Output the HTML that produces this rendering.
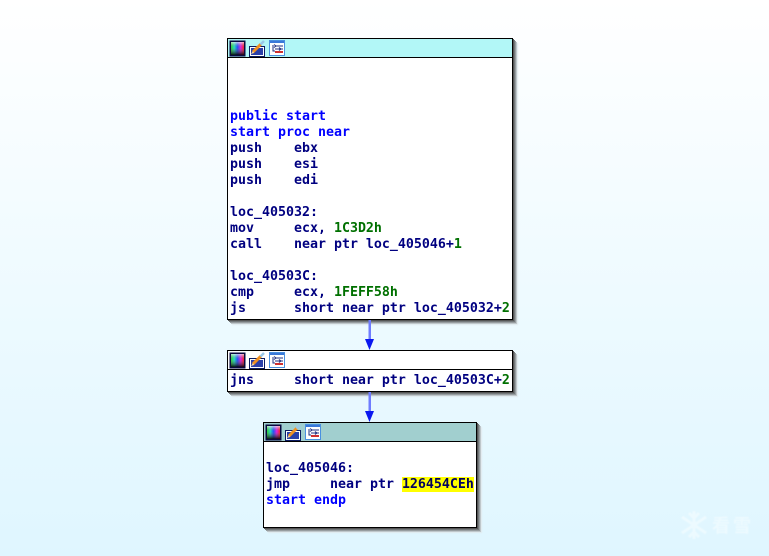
<!DOCTYPE html>
<html><head><meta charset="utf-8"><style>
html,body{margin:0;padding:0}
body{width:769px;height:556px;overflow:hidden;position:relative;background:linear-gradient(180deg,#ffffff 0%,#dff6ff 100%);font-family:"DejaVu Sans Mono",monospace;}
.b{position:absolute;box-sizing:border-box;border:1px solid #000;background:#fff;box-shadow:1px 1px 0 #555,2px 2px 0 #74797b,3px 3px 0 #979da0,4px 4px 0 #bfc7cb,5px 5px 1px #e0eaee}
.h{position:absolute;left:0;right:0;top:0;height:18px;border-bottom:1px solid #000}
.i{position:absolute;top:1px;left:1px}
pre{position:absolute;margin:0;font:bold 13.29px/16px "DejaVu Sans Mono",monospace;color:#000080;letter-spacing:0}
.k{color:#0000ff}.g{color:#007000}
.y{background:#ffff00;color:#000060}
.w{position:absolute;color:#fff;opacity:.4}
</style></head><body>
<svg width="0" height="0" style="position:absolute"><defs>
<linearGradient id="r" x1="0" y1="0" x2="1" y2="0"><stop offset="0" stop-color="#30d030"/><stop offset=".25" stop-color="#20e0c0"/><stop offset=".5" stop-color="#2050ff"/><stop offset=".75" stop-color="#e020e0"/><stop offset="1" stop-color="#ff2020"/></linearGradient>
<linearGradient id="d" x1="0" y1="0" x2="0" y2="1"><stop offset="0" stop-color="#fff" stop-opacity=".7"/><stop offset=".4" stop-color="#888" stop-opacity="0"/><stop offset="1" stop-color="#000" stop-opacity=".9"/></linearGradient>
<symbol id="ic" viewBox="0 0 58 17" width="58" height="17">
<rect x=".5" y=".5" width="16" height="16" fill="#0a0a40"/><rect x="2" y="2" width="13" height="13" fill="url(#r)"/><rect x="2" y="2" width="13" height="13" fill="url(#d)"/>
<rect x="20.5" y="6.5" width="15" height="10" fill="#fff" stroke="#0a1a60"/><rect x="22" y="8" width="12" height="7" fill="#2a3fa8"/>
<path d="M24 12L32 4" stroke="#f09020" stroke-width="3"/><path d="M31.500 4.500L35 1" stroke="#9ac8e8" stroke-width="2.500"/><path d="M22 14l2-3 1 2z" fill="#ffe0a0"/>
<rect x="40.500" y=".5" width="15" height="15" fill="#fff" stroke="#4a90e0"/><rect x="41" y="1" width="14" height="2" fill="#3a78d8"/>
<path d="M44 5v6h2M46 6h8M46 9h8" stroke="#203080" fill="none"/><path d="M45 4.500l2 1.500-2 1.500M50 7.500l2 1.500-2 1.500" stroke="#203080" fill="none"/><rect x="46" y="11" width="8" height="2" fill="#d03030"/>
</symbol></defs></svg>

<div class="b" style="left:227px;top:38px;width:286px;height:282px"><div class="h" style="background:#b2f7f7"><svg class="i" width="58" height="17"><use href="#ic"/></svg></div></div>
<pre style="left:230px;top:109px"><span class="k">public start
start proc near</span>
push    ebx
push    esi
push    edi

loc_405032:
mov     ecx, <span class="g">1C3D2h</span>
call    near ptr loc_405046+<span class="g">1</span>

loc_40503C:
cmp     ecx, <span class="g">1FEFF58h</span>
js      short near ptr loc_405032+<span class="g">2</span></pre>

<div class="b" style="left:227px;top:350px;width:286px;height:42px"><div class="h" style="background:#fff"><svg class="i" width="58" height="17"><use href="#ic"/></svg></div></div>
<pre style="left:230px;top:373px">jns     short near ptr loc_40503C+<span class="g">2</span></pre>

<div class="b" style="left:263px;top:422px;width:214px;height:106px"><div class="h" style="background:#a1cfcf"><svg class="i" width="58" height="17"><use href="#ic"/></svg></div></div>
<pre style="left:266px;top:461px">loc_405046:
jmp     near ptr <span class="y">126454CEh</span>
<span class="k">start endp</span></pre>

<svg style="position:absolute;left:360px;top:319px" width="20" height="104">
<rect x="8.500" y="1" width="2.500" height="21" fill="#6f7cff"/><path d="M5 20h9L9.500 31z" fill="#0a18f0"/>
<rect x="8.500" y="73" width="2.500" height="21" fill="#6f7cff"/><path d="M5 92h9L9.500 103z" fill="#0a18f0"/>
</svg>

<svg style="position:absolute;left:680px;top:510px;opacity:.4;filter:blur(.6px)" width="28" height="30" fill="none" stroke="#fff" stroke-width="3">
<path d="M14 1v28M2 7l24 16M26 7L2 23M9 3l5 5 5-5M9 27l5-5 5 5"/></svg>
<div class="w" style="left:712px;top:514px;font:bold 18px/22px 'Noto Sans CJK SC',sans-serif;letter-spacing:3px;white-space:nowrap;filter:blur(.5px)">看雪</div>
</body></html>
